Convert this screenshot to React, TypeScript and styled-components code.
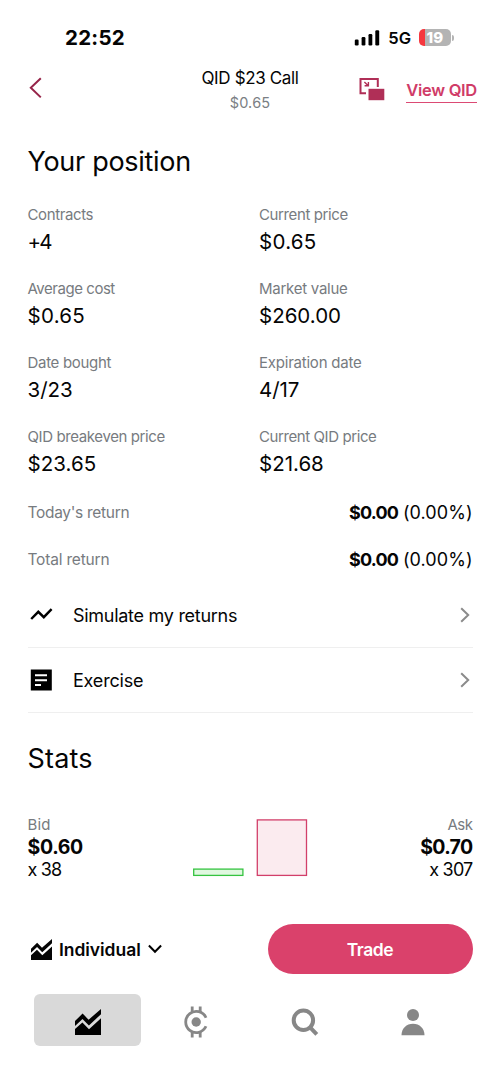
import React from 'react';
import styled, { createGlobalStyle } from 'styled-components';

const GlobalStyle = createGlobalStyle`
  *, *::before, *::after { box-sizing: border-box; }
  body {
    margin: 0;
    background: #fff;
    color: #050505;
    font-family: Inter, "Liberation Sans", sans-serif;
    font-kerning: normal;
  }
  svg { display: block; flex: none; }
`;

const Screen = styled.div`
  width: 500px;
  height: 1087px;
  display: flex;
  flex-direction: column;
  overflow: hidden;
`;

const StatusBar = styled.div`
  height: 58px;
  padding: 17px 46px 0 65px;
  display: flex;
  align-items: center;
  justify-content: space-between;
`;

const Clock = styled.span`
  font-size: 20.5px;
  font-weight: 700;
  letter-spacing: 0.25px;
`;

const StatusIcons = styled.div`
  display: flex;
  align-items: center;
`;

const Network = styled.span`
  margin: 1px 7.5px 0 8px;
  font-size: 16.5px;
  font-weight: 600;
  letter-spacing: 0.3px;
`;

const Battery = styled.div`
  width: 32px;
  height: 17px;
  border-radius: 5px;
  background: linear-gradient(90deg, #f5383f 6px, #b4b4b4 6px);
  display: flex;
  align-items: center;
  justify-content: center;
  color: #fff;
  font-size: 15px;
  font-weight: 800;
  letter-spacing: 0.3px;
`;

const BatteryTip = styled.div`
  width: 2px;
  height: 6px;
  margin-left: 1px;
  border-radius: 0 2px 2px 0;
  background: #b4b4b4;
`;

const Header = styled.header`
  height: 86px;
  padding: 10px 23px 0 28px;
  display: grid;
  grid-template-columns: 1fr 120px 1fr;
  align-items: start;
`;

const BackButton = styled.div`
  padding-top: 9px;
`;

const Titles = styled.div`
  display: flex;
  flex-direction: column;
  align-items: center;
  gap: 4px;
  margin-left: -5px;
  white-space: nowrap;
`;

const Title = styled.div`
  font-size: 17px;
  line-height: 21px;
  letter-spacing: -0.36px;
`;

const Subtitle = styled.div`
  font-size: 14.5px;
  line-height: 20px;
  letter-spacing: 0.2px;
  color: #7b7f84;
`;

const HeaderActions = styled.div`
  display: flex;
  justify-content: flex-end;
  gap: 21.5px;
  padding-top: 9px;
`;

const ViewLink = styled.a`
  margin-top: 3px;
  height: 23px;
  border-bottom: 1px solid #dc4a74;
  color: #d03c68;
  font-size: 16.5px;
  font-weight: 600;
  line-height: 21px;
  letter-spacing: -0.3px;
  white-space: nowrap;
`;

const Content = styled.main`
  padding: 0 27.5px;
`;

const Heading = styled.h2<{ $track: number; $top?: number }>`
  margin: ${(p) => p.$top ?? 0}px 0 0;
  font-size: 27px;
  font-weight: 400;
  line-height: 36px;
  letter-spacing: ${(p) => p.$track}px;
`;

const PositionGrid = styled.div`
  margin-top: 25px;
  display: grid;
  grid-template-columns: 231.5px 1fr;
  row-gap: 24px;
`;

const Label = styled.div<{ $track: number }>`
  font-size: 15px;
  line-height: 19px;
  letter-spacing: ${(p) => p.$track}px;
  color: #777b80;
`;

const Value = styled.div<{ $track: number }>`
  margin-top: 5px;
  font-size: 20.5px;
  line-height: 26px;
  letter-spacing: ${(p) => p.$track}px;
`;

const ReturnList = styled.div`
  padding-top: 12px;
`;

const ReturnRow = styled.div`
  height: 47px;
  display: flex;
  align-items: center;
  justify-content: space-between;
`;

const ReturnLabel = styled(Label)`
  font-size: 15.5px;
`;

const ReturnValue = styled.div`
  font-size: 18px;
  letter-spacing: 0.05px;
  display: flex;
  gap: 5px;
`;

const Amount = styled.b`
  font-weight: 700;
  letter-spacing: -0.85px;
`;

const MenuRow = styled.div`
  height: 65px;
  padding: 0 2.5px;
  border-bottom: 1px solid #efefef;
  display: flex;
  align-items: center;
`;

const MenuText = styled.div<{ $track: number }>`
  flex: 1;
  margin-left: 20px;
  font-size: 18px;
  letter-spacing: ${(p) => p.$track}px;
`;

const Quote = styled.div`
  margin-top: 38px;
  height: 66px;
  display: grid;
  grid-template-columns: 165.5px 115px 1fr;
`;

const QuoteSide = styled.div<{ $right?: boolean }>`
  text-align: ${(p) => (p.$right ? 'right' : 'left')};
`;

const QuotePrice = styled.div<{ $track: number }>`
  margin-top: 1px;
  font-size: 19.5px;
  font-weight: 700;
  line-height: 24px;
  letter-spacing: ${(p) => p.$track}px;
`;

const QuoteSize = styled.div`
  font-size: 18px;
  line-height: 22px;
  letter-spacing: -0.8px;
`;

const TradeBar = styled.div`
  margin-top: 43px;
  padding: 0 27px 0 30.5px;
  display: flex;
  align-items: center;
  justify-content: space-between;
`;

const Account = styled.div`
  display: flex;
  align-items: center;
  font-size: 17.5px;
  font-weight: 600;
`;

const AccountName = styled.span`
  margin: 0 7px 0 7.5px;
  letter-spacing: -0.05px;
`;

const TradeButton = styled.button`
  width: 205px;
  height: 50px;
  padding: 0 1px 0 0;
  border: 0;
  border-radius: 25px;
  background: #da416b;
  color: #fff;
  font: 600 17.5px Inter, "Liberation Sans", sans-serif;
  letter-spacing: -0.4px;
`;

const Nav = styled.nav`
  margin-top: 20px;
  padding-left: 34px;
  display: flex;
  gap: 1.6px;
`;

const NavItem = styled.div<{ $active?: boolean }>`
  width: 107px;
  height: 52px;
  border-radius: 6px;
  background: ${(p) => (p.$active ? '#d9d9d9' : 'transparent')};
  color: ${(p) => (p.$active ? '#000' : '#878787')};
  display: flex;
  align-items: center;
  justify-content: center;
  padding-top: 4px;
`;

const AreaChartIcon = ({ size }: { size: number }) => (
  <svg width={size} height={size} viewBox="0 0 26 26" fill="currentColor">
    <path d="M0 12 7.6 4.6 13.6 10.7 26 0V5.2L13.9 16.4 7.5 10 0 16.9Z" />
    <path d="M0 20 7.4 13.4 14 20.2 26 9.2V26H0Z" />
  </svg>
);

const ChevronRight = () => (
  <svg width="10" height="16" viewBox="0 0 10 16" fill="none" stroke="#8b8b8b" strokeWidth="2">
    <path d="M1.2 1.2 8.2 8 1.2 14.8" />
  </svg>
);

const DepthChart = () => (
  <svg width="115" height="62" viewBox="0 0 115 62" strokeWidth="1.3">
    <rect x="0.7" y="54.1" width="49.2" height="6.3" fill="#e0f8e0" stroke="#35c340" />
    <rect x="64.3" y="4.9" width="49.2" height="55.5" fill="#fbebef" stroke="#d23f6a" />
  </svg>
);

const positions: [string, string, number, number][] = [
  ['Contracts', '+4', -1.8, -0.38],
  ['Current price', '$0.65', 0.3, -0.38],
  ['Average cost', '$0.65', 0.3, -0.46],
  ['Market value', '$260.00', 0, -0.26],
  ['Date bought', '3/23', 0, -0.31],
  ['Expiration date', '4/17', -0.1, -0.22],
  ['QID breakeven price', '$23.65', 0.05, -0.39],
  ['Current QID price', '$21.68', 0, -0.41],
];

const returns: [string, number][] = [
  ["Today's return", -0.3],
  ['Total return', -0.18],
];

export default function App() {
  return (
    <Screen>
      <GlobalStyle />
      <StatusBar>
        <Clock>22:52</Clock>
        <StatusIcons>
          <svg width="26" height="16" viewBox="0 0 26 16" fill="#000">
            <rect x="0.8" y="9.5" width="3.8" height="6" rx="1.2" />
            <rect x="7.6" y="7" width="3.8" height="8.5" rx="1.2" />
            <rect x="14.5" y="4" width="3.8" height="11.5" rx="1.2" />
            <rect x="21.3" y="0.3" width="3.9" height="15.2" rx="1.2" />
          </svg>
          <Network>5G</Network>
          <Battery>19</Battery>
          <BatteryTip />
        </StatusIcons>
      </StatusBar>

      <Header>
        <BackButton>
          <svg width="15" height="22" viewBox="0 0 15 22" fill="none" stroke="#962449" strokeWidth="2">
            <path d="M12.8 1.2 2.8 10.8 12.8 20.4" />
          </svg>
        </BackButton>
        <Titles>
          <Title>QID $23 Call</Title>
          <Subtitle>$0.65</Subtitle>
        </Titles>
        <HeaderActions>
          <svg width="26" height="24" viewBox="0 0 26 24" fill="none" stroke="#b02f57" strokeWidth="2">
            <path d="M7 16.3H1.5V2H18.8V10" />
            <path d="M5.4 5 9 8.4M9.4 5V8.8H5.6" strokeWidth="1.4" />
            <rect x="9.5" y="11.8" width="15.8" height="11.4" fill="#b02f57" stroke="none" />
          </svg>
          <ViewLink>View QID</ViewLink>
        </HeaderActions>
      </Header>

      <Content>
        <Heading $track={-0.3}>Your position</Heading>
        <PositionGrid>
          {positions.map(([label, value, track, labelTrack]) => (
            <div key={label}>
              <Label $track={labelTrack}>{label}</Label>
              <Value $track={track}>{value}</Value>
            </div>
          ))}
        </PositionGrid>

        <ReturnList>
          {returns.map(([label, track]) => (
            <ReturnRow key={label}>
              <ReturnLabel $track={track}>{label}</ReturnLabel>
              <ReturnValue>
                <Amount>$0.00</Amount>
                <span>(0.00%)</span>
              </ReturnValue>
            </ReturnRow>
          ))}
        </ReturnList>

        <MenuRow>
          <svg width="23" height="22" viewBox="0 0 23 22" fill="none" stroke="#000" strokeWidth="2.4">
            <path d="M1.2 15 8.3 7.8 13.8 13.2 21.6 5.2" />
          </svg>
          <MenuText $track={-0.28}>Simulate my returns</MenuText>
          <ChevronRight />
        </MenuRow>
        <MenuRow>
          <svg width="23" height="22" viewBox="0 0 23 22">
            <rect x="0.8" y="0.5" width="21" height="21" fill="#000" />
            <path d="M5 6.2H17M5 11.2H17M5 16H11" stroke="#fff" strokeWidth="2" />
          </svg>
          <MenuText $track={-0.2}>Exercise</MenuText>
          <ChevronRight />
        </MenuRow>

        <Heading $track={0.2} $top={28}>Stats</Heading>

        <Quote>
          <QuoteSide>
            <Label $track={0.1}>Bid</Label>
            <QuotePrice $track={-0.35}>$0.60</QuotePrice>
            <QuoteSize>x 38</QuoteSize>
          </QuoteSide>
          <DepthChart />
          <QuoteSide $right>
            <Label $track={-0.5}>Ask</Label>
            <QuotePrice $track={-0.65}>$0.70</QuotePrice>
            <QuoteSize>x 307</QuoteSize>
          </QuoteSide>
        </Quote>
      </Content>

      <TradeBar>
        <Account>
          <AreaChartIcon size={21} />
          <AccountName>Individual</AccountName>
          <svg width="14" height="10" viewBox="0 0 14 10" fill="none" stroke="#000" strokeWidth="2">
            <path d="M0.9 1.5 7 7.8 13.1 1.5" />
          </svg>
        </Account>
        <TradeButton>Trade</TradeButton>
      </TradeBar>

      <Nav>
        <NavItem $active>
          <AreaChartIcon size={26} />
        </NavItem>
        <NavItem>
          <svg width="26" height="32" viewBox="0 0 26 32" fill="none" stroke="currentColor" strokeWidth="2.8">
            <path d="M23 11.7A10.6 10.6 0 1 0 23 20.3" />
            <path d="M9.2 0.4V6.5M17.2 0.4V6.5M9.2 25.5V31.6M17.2 25.5V31.6" />
            <circle cx="13.2" cy="16" r="4.7" fill="currentColor" stroke="none" />
          </svg>
        </NavItem>
        <NavItem>
          <svg width="28" height="28" viewBox="0 0 28 28" fill="none" stroke="currentColor" strokeWidth="4">
            <circle cx="12.4" cy="12.3" r="9.7" />
            <path d="M18.6 18.8 25.8 26.4" />
          </svg>
        </NavItem>
        <NavItem>
          <svg width="24" height="28" viewBox="0 0 24 28" fill="currentColor">
            <circle cx="12" cy="7" r="6" />
            <path d="M0.5 27.3C0.5 20.5 5.5 15.8 12 15.8S23.5 20.5 23.5 27.3Z" />
          </svg>
        </NavItem>
      </Nav>
    </Screen>
  );
}
